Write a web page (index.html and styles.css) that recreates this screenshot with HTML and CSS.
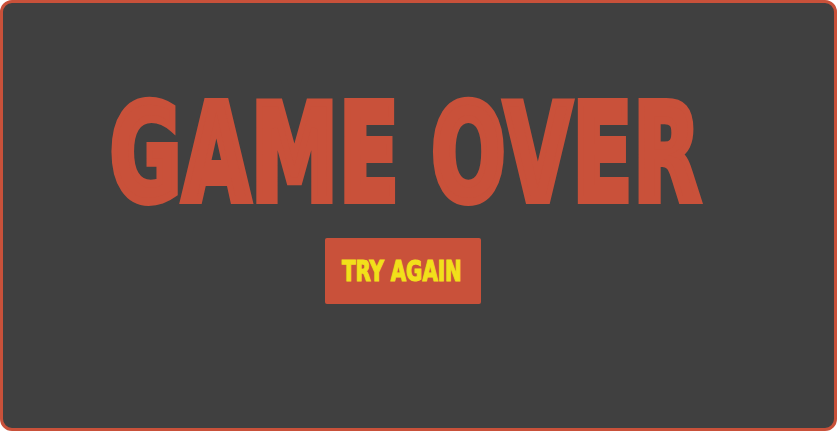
FILE: index.html
```html
<!DOCTYPE html>
<html>
<head>
<meta charset="utf-8">
<link rel="stylesheet" href="styles.css">
</head>
<body>
<div class="screen">
  <h1 class="title">GAME OVER</h1>
  <button class="retry"><span class="retry-label">TRY AGAIN</span></button>
</div>
</body>
</html>
```
FILE: styles.css
```css
html, body {
  margin: 0;
  padding: 0;
  background: #ffffff;
}
.screen {
  box-sizing: border-box;
  width: 837px;
  height: 431px;
  background: #404040;
  border: 3px solid #c9513a;
  border-radius: 12px;
  display: flex;
  flex-direction: column;
  align-items: center;
  padding: 80px 32px 0 0;
}
.title {
  margin: 0;
  font-family: "DejaVu Sans", sans-serif;
  font-stretch: condensed;
  font-weight: 700;
  font-size: 134px;
  line-height: 142px;
  color: #c9513a;
  -webkit-text-stroke: 8px #c9513a;
  letter-spacing: 2px;
  transform: translateX(3px) scaleX(0.72);
  white-space: nowrap;
}
.retry {
  margin-top: 13px;
  width: 156px;
  height: 66px;
  border: none;
  border-radius: 2px;
  background: #c9513a;
  padding: 0;
  display: flex;
  align-items: center;
  justify-content: center;
}
.retry-label {
  display: inline-block;
  color: #f2e01a;
  font-family: "DejaVu Sans", sans-serif;
  font-stretch: condensed;
  font-weight: 700;
  font-size: 29px;
  line-height: 30px;
  -webkit-text-stroke: 1.2px #f2e01a;
  white-space: nowrap;
  transform: translateX(-1px) scaleX(0.76);
}
```
